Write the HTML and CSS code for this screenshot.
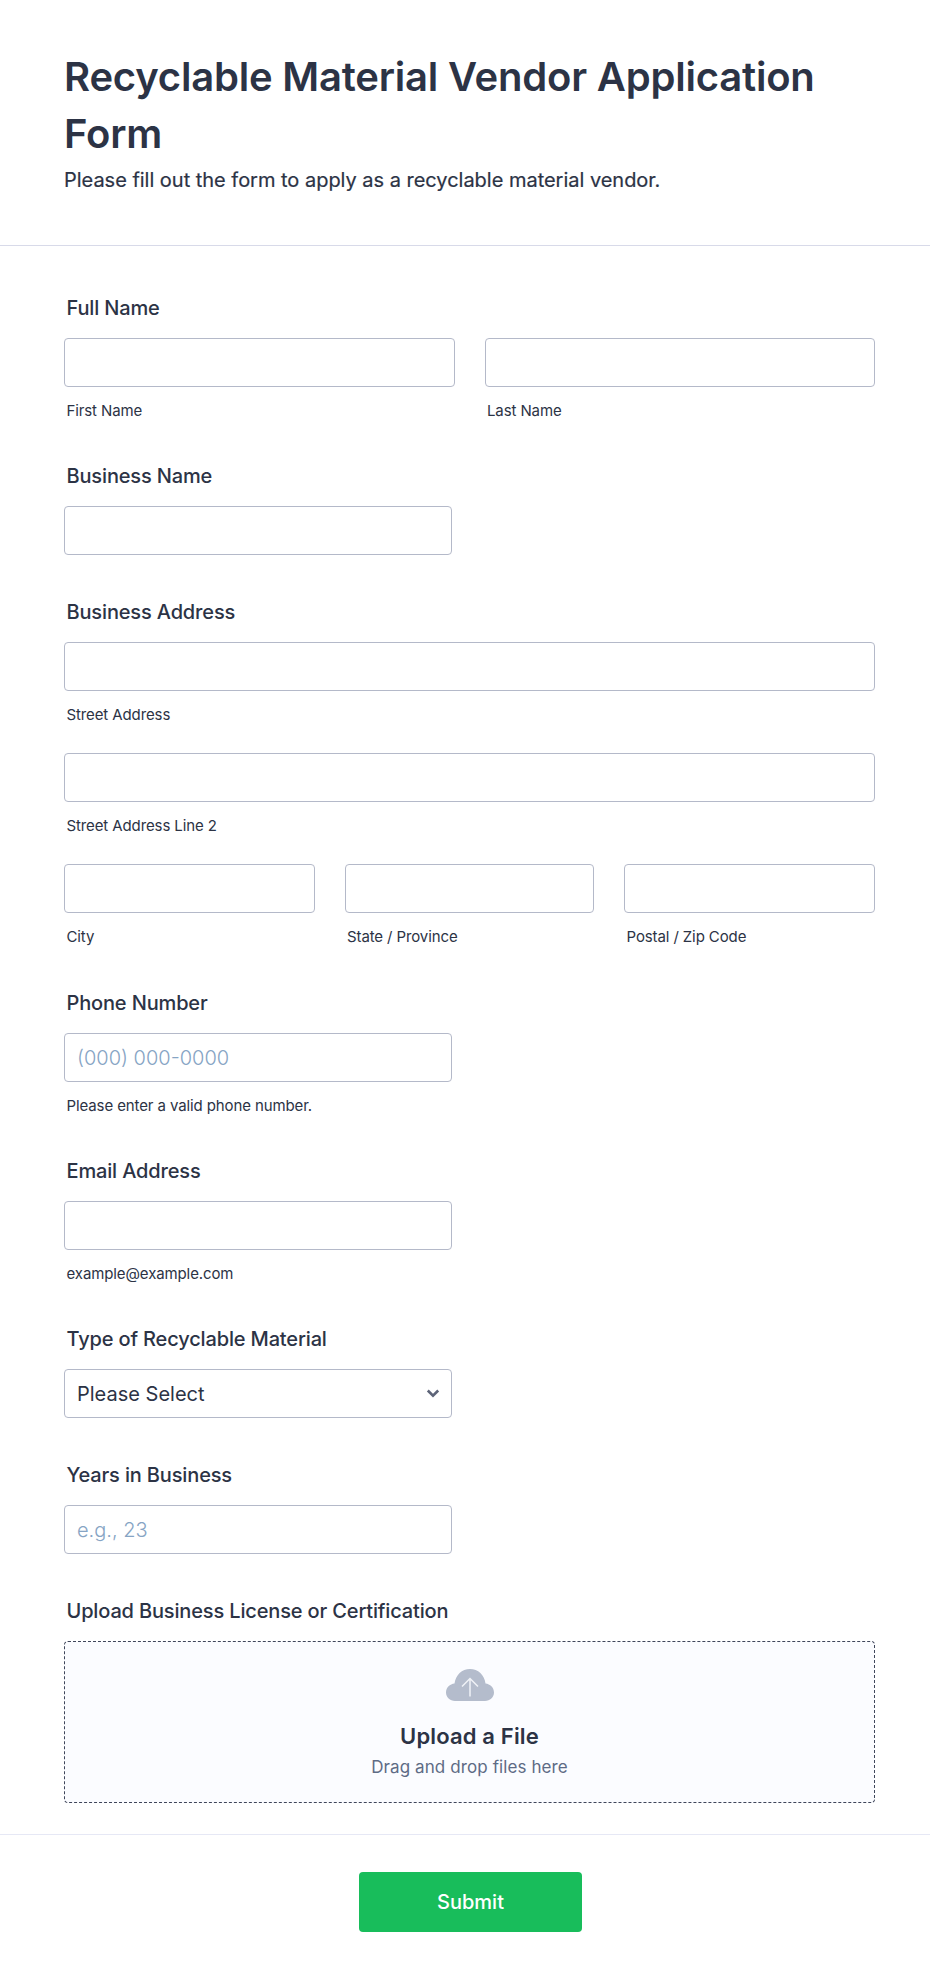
FILE: index.html
```html
<!DOCTYPE html>
<html lang="en">
<head>
<meta charset="utf-8">
<title>Recyclable Material Vendor Application Form</title>
<link rel="stylesheet" href="styles.css">
</head>
<body>
<form class="form">
  <header class="header">
    <h1 class="title">Recyclable Material Vendor Application Form</h1>
    <p class="subtitle">Please fill out the form to apply as a recyclable material vendor.</p>
  </header>
  <div class="fields">
    <section class="field">
      <div class="label">Full Name</div>
      <div class="cols cols-2">
        <div><input class="input" type="text"><div class="sub">First Name</div></div>
        <div><input class="input" type="text"><div class="sub">Last Name</div></div>
      </div>
    </section>
    <section class="field">
      <div class="label">Business Name</div>
      <input class="input half" type="text">
    </section>
    <section class="field">
      <div class="label">Business Address</div>
      <div class="stack">
        <div><input class="input" type="text"><div class="sub">Street Address</div></div>
        <div><input class="input" type="text"><div class="sub">Street Address Line 2</div></div>
        <div class="cols cols-3">
          <div><input class="input" type="text"><div class="sub">City</div></div>
          <div><input class="input" type="text"><div class="sub">State / Province</div></div>
          <div><input class="input" type="text"><div class="sub">Postal / Zip Code</div></div>
        </div>
      </div>
    </section>
    <section class="field">
      <div class="label">Phone Number</div>
      <input class="input half" type="text" placeholder="(000) 000-0000">
      <div class="sub">Please enter a valid phone number.</div>
    </section>
    <section class="field">
      <div class="label">Email Address</div>
      <input class="input half" type="text">
      <div class="sub">example@example.com</div>
    </section>
    <section class="field">
      <div class="label">Type of Recyclable Material</div>
      <div class="select-wrap half">
        <select class="input select"><option>Please Select</option></select>
        <svg class="chevron" width="14" height="9" viewBox="0 0 14 9" aria-hidden="true"><path d="M1.800 1.500 7 6.700 12.200 1.500" fill="none" stroke="#5d6478" stroke-width="2.600"/></svg>
      </div>
    </section>
    <section class="field">
      <div class="label">Years in Business</div>
      <input class="input half" type="text" placeholder="e.g., 23">
    </section>
    <section class="field field-upload">
      <div class="label">Upload Business License or Certification</div>
      <div class="upload">
        <svg class="cloud" width="48" height="32" viewBox="0 0 48 32" aria-hidden="true">
          <path d="M9 32C4 32 0 28 0 23.500C0 18.500 4 15 8.500 14.500C9.500 6 16 0 24 0C32 0 38.500 6 39.500 14.500C44 15 48 18.500 48 23.500C48 28 44 32 39 32Z" fill="#b4bccc"/>
          <path d="M24 27.500V9.500M16 17.500 24 9.500 32 17.500" fill="none" stroke="#f0f2f7" stroke-width="1.500"/>
        </svg>
        <div class="upload-title">Upload a File</div>
        <div class="upload-sub">Drag and drop files here</div>
      </div>
    </section>
  </div>
  <footer class="footer">
    <button class="submit" type="button">Submit</button>
  </footer>
</form>
</body>
</html>
```
FILE: styles.css
```css
* { box-sizing: border-box; }
html, body { margin: 0; padding: 0; background: #fff; }
body { font-family: Inter, "Liberation Sans", sans-serif; color: #2c3345; }
.header { padding: 48px 64px 47px; border-bottom: 1px solid #d8dae9; height: 246px; }
.title { margin: 0; font-size: 40px; line-height: 57px; font-weight: 600; letter-spacing: -0.2px; color: #2c3345; }
.subtitle { margin: 3px 0 0; font-size: 20px; line-height: 30px; font-weight: 400; letter-spacing: -0.02px; -webkit-text-stroke: 0.2px #2c3345; color: #2c3345; }
.fields { padding: 50px 55px 31px 64px; display: flex; flex-direction: column; gap: 45px; }
.label { font-size: 20px; line-height: 24px; font-weight: 500; letter-spacing: -0.15px; padding-left: 2.5px; margin-bottom: 18px; }
.input { display: block; width: 100%; height: 49px; border: 1px solid #b4b9c9; border-radius: 4px; background: #fff; padding: 0 12px; font: 400 20px Inter, sans-serif; color: #2c3345; }
.input::placeholder { color: #86a4c4; opacity: 1; font-weight: 300; }
.half { width: 388px; }
.cols { display: grid; column-gap: 30px; }
.cols-2 { grid-template-columns: 1fr 1fr; }
.cols-3 { grid-template-columns: 250.5fr 249.5fr 251fr; }
.stack { display: flex; flex-direction: column; gap: 30px; margin-bottom: 1px; }
.sub { font-size: 15px; line-height: 16px; letter-spacing: -0.11px; padding: 15.5px 0 0.5px 2.5px; color: #2c3345; }
.select-wrap { position: relative; }
.select { appearance: none; }
.chevron { position: absolute; right: 12px; top: 20px; pointer-events: none; }
.upload { height: 162px; border: 1px dashed #3f465a; border-radius: 4px; background: #fbfcff; display: flex; flex-direction: column; align-items: center; padding-top: 27px; }
.upload-title { font-size: 22px; line-height: 30px; font-weight: 600; letter-spacing: 0.15px; margin-top: 20px; }
.upload-sub { font-size: 17px; line-height: 26px; letter-spacing: 0.1px; color: #5e6b85; margin-top: 3px; }
.footer { border-top: 1px solid #e6e8f5; padding: 37px 53px 50px 64px; display: flex; justify-content: center; }
.submit { width: 223px; height: 60px; border: 0; border-radius: 4px; background: #18bd5b; color: #fff; font: 500 20px Inter, sans-serif; }
```
